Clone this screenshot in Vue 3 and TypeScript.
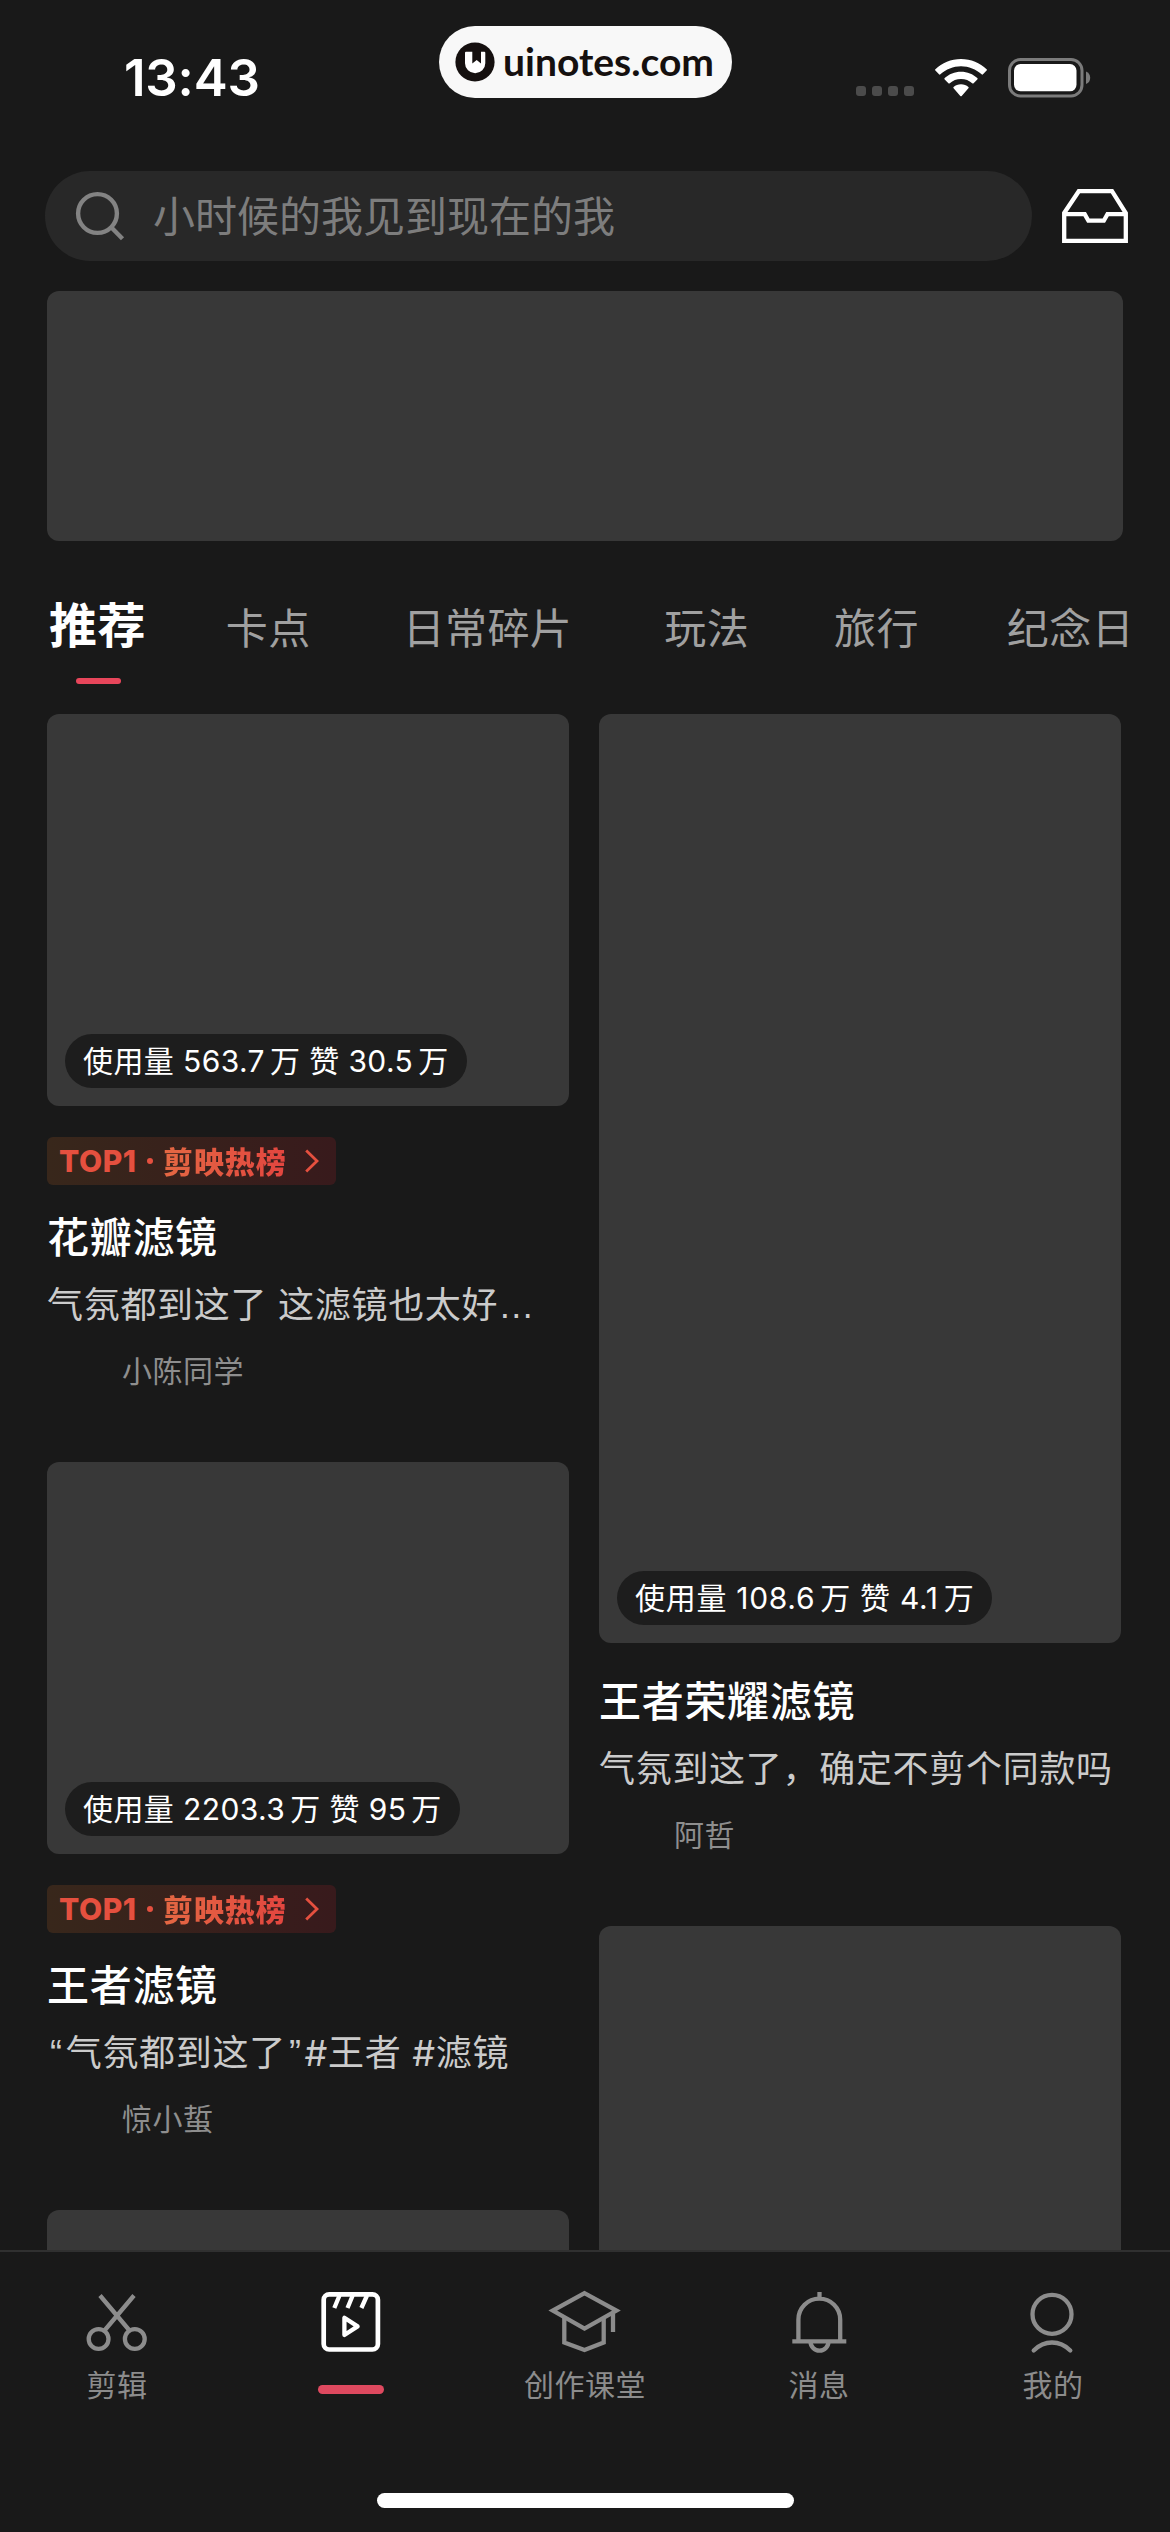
<script setup lang="ts">
interface Tab {
  label: string
  active?: boolean
  gap: number
}

interface Template {
  height: number
  usage?: string
  likes?: string
  tracking?: number
  ranked?: boolean
  title?: string
  desc?: string
  author?: string
}

type IconName = 'cut' | 'film' | 'course' | 'bell' | 'user'

interface NavItem {
  icon: IconName
  label: string
  active?: boolean
}

const tabs: Tab[] = [
  { label: '推荐', active: true, gap: 0 },
  { label: '卡点', gap: 80 },
  { label: '日常碎片', gap: 92 },
  { label: '玩法', gap: 92 },
  { label: '旅行', gap: 85 },
  { label: '纪念日', gap: 88 },
]

const columns: Template[][] = [
  [
    {
      height: 392,
      usage: '563.7',
      likes: '30.5',
      ranked: true,
      title: '花瓣滤镜',
      desc: '气氛都到这了 这滤镜也太好…',
      author: '小陈同学',
    },
    {
      height: 392,
      usage: '2203.3',
      likes: '95',
      ranked: true,
      title: '王者滤镜',
      desc: '“气氛都到这了”#王者 #滤镜',
      author: '惊小蜇',
    },
    { height: 392 },
  ],
  [
    {
      height: 929,
      usage: '108.6',
      likes: '4.1',
      tracking: 0.7,
      title: '王者荣耀滤镜',
      desc: '气氛到这了，确定不剪个同款吗',
      author: '阿哲',
    },
    { height: 929 },
  ],
]

const nav: NavItem[] = [
  { icon: 'cut', label: '剪辑' },
  { icon: 'film', label: '', active: true },
  { icon: 'course', label: '创作课堂' },
  { icon: 'bell', label: '消息' },
  { icon: 'user', label: '我的' },
]

// Quotes and the ellipsis are set in their own face, apart from the running text.
function pieces(text: string): { text: string; kind: string }[] {
  return text
    .split(/([“”…])/)
    .filter((part) => part !== '')
    .map((part) => ({
      text: part,
      kind: part === '…' ? 'ellipsis' : /[“”]/.test(part) ? 'quote' : '',
    }))
}
</script>

<template>
  <main class="screen">
    <header class="status">
      <time class="clock">13:43</time>
      <div class="site">
        <svg class="site-logo" viewBox="0 0 40 40">
          <circle cx="20" cy="20" r="19.600" fill="#15100f" />
          <path d="M10 10.700q0-1 1-1h6.300v11.800l4.400-3.500 4.300 3.500V9.700h3.300q1 0 1 1V21.300a10.150 10 0 0 1-20.300 0z" fill="#fff" />
        </svg>
        <span class="site-name">uinotes.com</span>
      </div>
      <div class="indicators">
        <div class="signal"><i v-for="n in 4" :key="n" /></div>
        <svg class="wifi" viewBox="0 0 52 38" fill="#fff">
          <path d="M26 0C16 0 7 3.800.400 10.200q-.7.700 0 1.400l3.600 3.700q.7.700 1.400 0C11 10.300 18.200 7.300 26 7.300s15 3 20.600 8q.7.700 1.400 0l3.600-3.700q.7-.7 0-1.400C45 3.800 36 0 26 0z" />
          <path d="M26 12.700c-6.300 0-12 2.400-16.300 6.300q-.8.700 0 1.400l3.700 3.800q.7.700 1.400 0C17.800 21.500 21.700 20 26 20s8.200 1.500 11.200 4.200q.7.700 1.400 0l3.700-3.800q.8-.7 0-1.400C38 15.100 32.300 12.700 26 12.700z" />
          <path d="M26 25.200c-2.900 0-5.400 1-7.400 2.700q-.7.700 0 1.400l6.700 7.700q.7.700 1.400 0l6.700-7.700q.7-.7 0-1.400C31.400 26.200 28.900 25.200 26 25.200z" />
        </svg>
        <svg class="battery" viewBox="0 0 83 40">
          <rect x="1.500" y="1.500" width="72.500" height="36.500" rx="11" fill="none" stroke="#7b7b7b" stroke-width="3" />
          <rect x="6" y="6" width="62.500" height="27.300" rx="6.500" fill="#fff" />
          <path d="M78 13.500c2.700 1 4.200 3.300 4.200 6.300s-1.500 5.300-4.200 6.300z" fill="#7b7b7b" />
        </svg>
      </div>
    </header>

    <section class="search-row">
      <div class="search">
        <svg class="search-icon" viewBox="0 0 52 52" fill="none" stroke="#838383" stroke-width="4.400">
          <circle cx="23.500" cy="23.500" r="19.400" />
          <path d="M37.200 37.200l11.300 11.500" />
        </svg>
        <span class="search-text">小时候的我见到现在的我</span>
      </div>
      <svg class="inbox" viewBox="0 0 66 54" fill="none" stroke="#fff" stroke-width="4.300">
        <path d="M2.200 24L16.800 2.200h33.200L63.800 24v27.800H2.200z" />
        <path d="M2.200 25.200h20.500l3.700 6.500h15.400l3.700-6.500h18.300" />
      </svg>
    </section>

    <div class="banner" />

    <nav class="tabs">
      <span
        v-for="tab in tabs"
        :key="tab.label"
        class="tab"
        :class="{ active: tab.active }"
        :style="{ marginLeft: tab.gap + 'px' }"
      >{{ tab.label }}</span>
    </nav>

    <section class="feed">
      <div v-for="(column, c) in columns" :key="c" class="column">
        <article v-for="(item, i) in column" :key="i" class="card">
          <div class="thumb" :style="{ height: item.height + 'px' }">
            <p v-if="item.usage" class="stats" :style="{ letterSpacing: (item.tracking ?? 0.4) + 'px' }">
              使用量 {{ item.usage }}<b>万</b> 赞 {{ item.likes }}<b>万</b>
            </p>
          </div>
          <div v-if="item.title" class="info">
            <div v-if="item.ranked" class="rank">
              <span class="rank-top">TOP1</span>
              <span class="rank-dot" />
              <span class="rank-name">剪映热榜</span>
              <svg class="rank-arrow" viewBox="0 0 14 24" fill="none" stroke="#e5503f" stroke-width="2.800">
                <path d="M1.200 1.500L12 12 1.200 22.500" />
              </svg>
            </div>
            <h3 class="title">{{ item.title }}</h3>
            <p class="desc">
              <span v-for="(piece, p) in pieces(item.desc ?? '')" :key="p" :class="piece.kind">{{ piece.text }}</span>
            </p>
            <p class="author">{{ item.author }}</p>
          </div>
        </article>
      </div>
    </section>

    <footer class="bottom">
      <div class="nav">
        <div v-for="item in nav" :key="item.icon" class="nav-item" :class="{ on: item.active }">
          <svg class="nav-icon" viewBox="0 0 76 68" fill="none" stroke="currentColor" stroke-width="4.300">
            <g v-if="item.icon === 'cut'">
              <path d="M21 9.500l29.500 35M55 9.500l-29.500 35" />
              <circle cx="19.600" cy="53" r="9.900" />
              <circle cx="55.800" cy="53" r="9.900" />
            </g>
            <g v-else-if="item.icon === 'film'">
              <rect x="10.700" y="8.300" width="54.200" height="55.200" rx="5.500" stroke-width="4.700" />
              <path d="M26.500 9.500l-5.200 12.500M39.700 9.500l-5.200 12.500M54 9.500l-5.600 12.500" />
              <path d="M31.400 31.800v17.200l13.200-8.600z" stroke-linejoin="round" />
            </g>
            <g v-else-if="item.icon === 'course'">
              <path d="M37.500 7.200L5.800 24.500l31.700 18 31.900-18z" />
              <path d="M17.300 31.500v25l20.200 7.500L56.700 56.500v-25M66 27.500V46" />
            </g>
            <g v-else-if="item.icon === 'bell'">
              <path d="M38.500 6v6M17.400 55V33.500a20.900 20.900 0 0 1 41.800 0V55M11.300 55.300h54" />
              <path d="M29.500 55.500a9 9.200 0 0 0 18 0" />
            </g>
            <g v-else>
              <circle cx="37" cy="28.300" r="19.500" />
              <path d="M18.700 64.500q8-8 18.300-8t18.300 8" stroke-linecap="round" />
            </g>
          </svg>
          <span v-if="item.active" class="nav-bar" />
          <span v-else class="nav-label">{{ item.label }}</span>
        </div>
      </div>
      <div class="home" />
    </footer>
  </main>
</template>

<style>
body {
  background: #191919;
}
</style>

<style scoped>
.screen {
  width: 1170px;
  height: 2532px;
  display: flex;
  flex-direction: column;
  overflow: hidden;
  background: #191919;
  color: #fff;
  font-family: Inter, "Noto Sans CJK SC", sans-serif;
}

p,
h3 {
  margin: 0;
}

/* status bar */
.status {
  flex: none;
  height: 171px;
  display: flex;
  align-items: flex-start;
}

.clock {
  width: 315px;
  margin-top: 48px;
  padding-left: 124px;
  font-size: 51px;
  line-height: 60px;
  font-weight: 600;
  letter-spacing: -0.2px;
}

.site {
  width: 293px;
  height: 72px;
  margin-top: 26px;
  box-sizing: border-box;
  padding-left: 16px;
  display: flex;
  align-items: center;
  border-radius: 36px;
  background: #f8f8f8;
  color: #15100f;
}

.site-logo {
  width: 40px;
  height: 40px;
}

.site-name {
  margin: 0 0 2px 8px;
  font: 700 39px/48px Lato, sans-serif;
}

.indicators {
  display: flex;
  align-items: flex-start;
  margin: 58px 0 0 124px;
}

.signal {
  display: flex;
  gap: 6px;
  margin-top: 28px;
}

.signal i {
  width: 10px;
  height: 10px;
  border-radius: 3px;
  background: #4b4b4b;
}

.wifi {
  width: 52px;
  height: 38px;
  margin: 1px 0 0 21px;
}

.battery {
  width: 83px;
  height: 40px;
  margin-left: 21px;
}

/* search */
.search-row {
  flex: none;
  height: 90px;
  display: flex;
  align-items: center;
  padding-left: 45px;
}

.search {
  width: 987px;
  height: 90px;
  display: flex;
  align-items: center;
  border-radius: 45px;
  background: #282828;
  color: #7d7d7d;
  font-size: 42px;
  line-height: 60px;
}

.search-icon {
  width: 52px;
  height: 52px;
  margin: 0 27px 0 29px;
}

.search-text {
  padding-top: 2px;
}

.inbox {
  width: 66px;
  height: 54px;
  margin-left: 30px;
}

.banner {
  flex: none;
  width: 1076px;
  height: 250px;
  margin: 30px 0 0 47px;
  border-radius: 12px;
  background: #383838;
}

/* category tabs */
.tabs {
  flex: none;
  height: 173px;
  box-sizing: border-box;
  display: flex;
  align-items: flex-start;
  padding: 58px 0 0 49px;
  white-space: nowrap;
}

.tab {
  font-size: 42px;
  line-height: 60px;
  letter-spacing: 0.4px;
  color: #a0a0a0;
}

.tab.active {
  position: relative;
  margin-top: -3px;
  font-size: 48px;
  font-weight: 700;
  color: #fff;
}

.tab.active::after {
  content: "";
  position: absolute;
  left: 27px;
  bottom: -28px;
  width: 45px;
  height: 6px;
  border-radius: 3px;
  background: #e8465b;
}

/* two-column feed */
.feed {
  flex: 1;
  min-height: 0;
  display: flex;
  gap: 30px;
  padding-left: 47px;
  overflow: hidden;
}

.column {
  width: 522px;
}

.thumb {
  display: flex;
  align-items: flex-end;
  box-sizing: border-box;
  padding: 18px;
  border-radius: 12px;
  background: #383838;
}

.stats {
  height: 54px;
  padding: 0 18px;
  border-radius: 27px;
  background: #1d1d1d;
  font-size: 30px;
  line-height: 54px;
  white-space: nowrap;
}

.stats b {
  margin-left: 5px;
  font-weight: 400;
}

.info {
  display: flow-root;
  padding-bottom: 69px;
}

.rank {
  width: 289px;
  height: 48px;
  margin: 31px 0 -6px;
  box-sizing: border-box;
  padding-left: 12px;
  display: flex;
  align-items: center;
  border-radius: 6px;
  background: linear-gradient(90deg, #38271b, #381a1c);
  color: #e5503f;
}

.rank-top {
  width: 80px;
  font-size: 30px;
  font-weight: 800;
  letter-spacing: 0.6px;
}

.rank-dot {
  width: 6px;
  height: 6px;
  margin: 0 10px 0 8px;
  border-radius: 50%;
  background: #e5503f;
}

.rank-name {
  width: 124px;
  padding-bottom: 2px;
  font-size: 30px;
  font-weight: 900;
  letter-spacing: 0.9px;
  white-space: nowrap;
  background: linear-gradient(90deg, #e46843, #e2453f);
  background-clip: text;
  color: transparent;
}

.rank-arrow {
  width: 14px;
  height: 24px;
  margin-left: 18px;
}

.title {
  margin-top: 29px;
  font-size: 42px;
  line-height: 60px;
  font-weight: 500;
  letter-spacing: 0.7px;
}

.desc {
  margin-top: 12px;
  font-size: 36px;
  line-height: 50px;
  letter-spacing: 0.7px;
  color: #cbcbcb;
  white-space: nowrap;
}

.quote {
  padding: 0 3px;
  font-family: "Liberation Sans", sans-serif;
  line-height: 1;
}

.ellipsis {
  font-family: "Liberation Sans", sans-serif;
  line-height: 1;
}

.author {
  margin: 19px 0 0 75px;
  font-size: 30px;
  line-height: 44px;
  letter-spacing: 0.5px;
  color: #8e8e8e;
}

/* bottom navigation */
.bottom {
  flex: none;
  height: 282px;
  box-sizing: border-box;
  border-top: 2px solid #303030;
  background: #191919;
}

.nav {
  display: flex;
  height: 241px;
  box-sizing: border-box;
  padding-top: 34px;
}

.nav-item {
  width: 234px;
  display: flex;
  flex-direction: column;
  align-items: center;
  color: #8c8c8c;
}

.nav-item.on {
  color: #fff;
}

.nav-icon {
  width: 76px;
  height: 68px;
}

.nav-label {
  margin-top: 9px;
  font-size: 30px;
  line-height: 44px;
  letter-spacing: 0.5px;
}

.nav-bar {
  width: 66px;
  height: 9px;
  margin-top: 31px;
  border-radius: 5px;
  background: #df495f;
}

.home {
  width: 417px;
  height: 15px;
  margin-left: 377px;
  border-radius: 8px;
  background: #fff;
}
</style>
